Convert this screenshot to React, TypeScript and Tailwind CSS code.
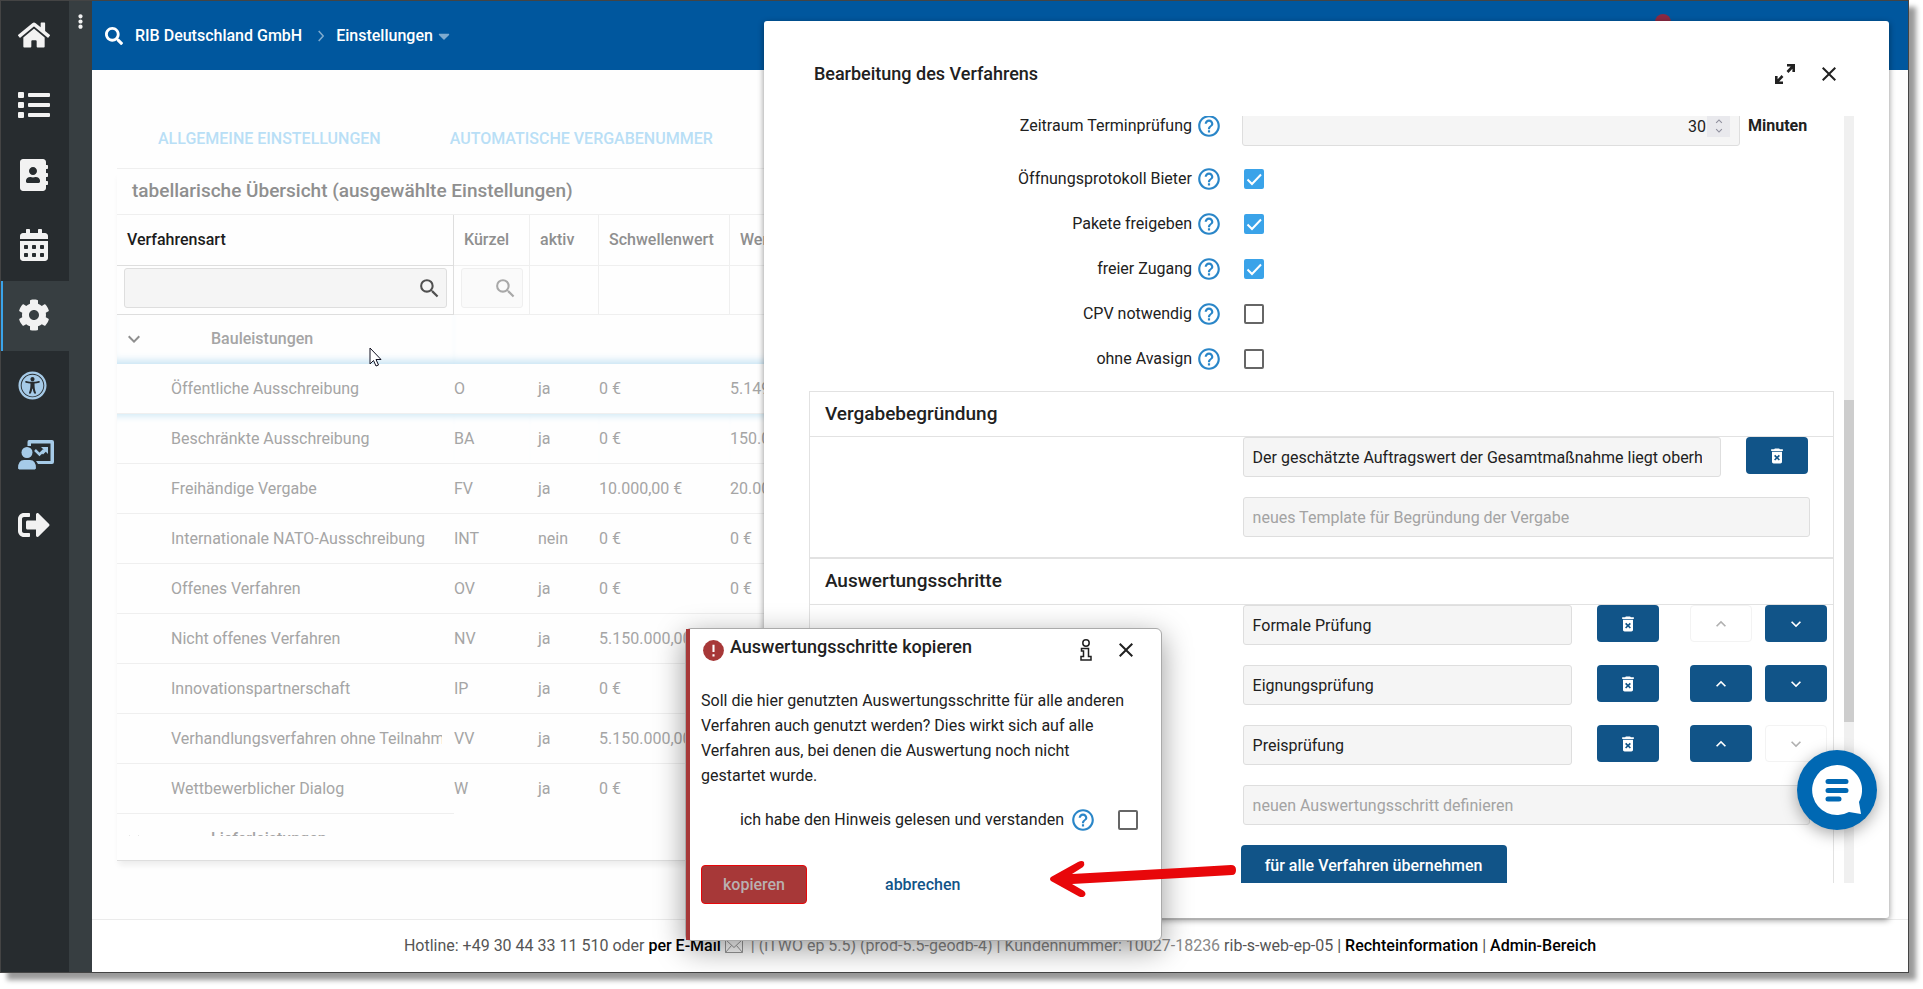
import type { ReactNode } from "react";
import {
  FaAddressBook,
  FaCalendarAlt,
  FaCaretDown,
  FaCog,
  FaEllipsisV,
  FaHome,
  FaList,
  FaSearch,
  FaSignOutAlt,
  FaUniversalAccess,
} from "react-icons/fa";
import {
  MdClose,
  MdDeleteForever,
  MdHelpOutline,
  MdKeyboardArrowDown,
  MdKeyboardArrowUp,
  MdSearch,
} from "react-icons/md";

const procedures = [
  { name: "Öffentliche Ausschreibung", code: "O", active: "ja", threshold: "0 €", limit: "5.149.999,00 €" },
  { name: "Beschränkte Ausschreibung", code: "BA", active: "ja", threshold: "0 €", limit: "150.000,00 €" },
  { name: "Freihändige Vergabe", code: "FV", active: "ja", threshold: "10.000,00 €", limit: "20.000,00 €" },
  { name: "Internationale NATO-Ausschreibung", code: "INT", active: "nein", threshold: "0 €", limit: "0 €" },
  { name: "Offenes Verfahren", code: "OV", active: "ja", threshold: "0 €", limit: "0 €" },
  { name: "Nicht offenes Verfahren", code: "NV", active: "ja", threshold: "5.150.000,00 €", limit: "" },
  { name: "Innovationspartnerschaft", code: "IP", active: "ja", threshold: "0 €", limit: "" },
  { name: "Verhandlungsverfahren ohne Teilnahmewettbewerb", code: "VV", active: "ja", threshold: "5.150.000,00 €", limit: "" },
  { name: "Wettbewerblicher Dialog", code: "W", active: "ja", threshold: "0 €", limit: "" },
];

const options = [
  { id: "protokoll", label: "Öffnungsprotokoll Bieter", checked: true },
  { id: "pakete", label: "Pakete freigeben", checked: true },
  { id: "zugang", label: "freier Zugang", checked: true },
  { id: "cpv", label: "CPV notwendig", checked: false },
  { id: "avasign", label: "ohne Avasign", checked: false },
];

const steps = ["Formale Prüfung", "Eignungsprüfung", "Preisprüfung"];

const inputClass =
  "h-10 min-w-0 rounded-[3px] border border-[#dedede] bg-[#f5f5f5] px-[9px] text-base text-[#212121] placeholder:text-[#a3a3a3]";

function PresentationIcon() {
  return (
    <svg viewBox="0 0 36 30" className="h-[30px] w-9" fill="#a6cbe8">
      <path d="M11 0h23q2 0 2 2v20q0 2-2 2H20l-2-3h14.500V3.500H13V6H9.500V2Q9.500 0 11 0z" />
      <circle cx="9" cy="12.500" r="5.500" />
      <path d="M0 28.500q0-8.500 6-8.500h6q6 0 6 8.500l-1.200 1H1.200z" />
      <path d="M17 10l4.500 4.500 4.500-4.500" fill="none" stroke="#a6cbe8" strokeWidth="2.500" />
      <path d="M23 7h7v7l-2.200-2.200-2.800 2.800-2-2 2.800-2.800z" />
    </svg>
  );
}

function SideItem({ label, active, children }: { label: string; active?: boolean; children: ReactNode }) {
  return (
    <a
      href="#"
      aria-label={label}
      className={
        active
          ? "flex h-[70px] items-center border-l-2 border-[#3aa3e9] bg-[#373e41] pb-0.5 pl-[15px] text-[#f2f2f2]"
          : "flex h-[70px] items-center pb-0.5 pl-[17px] text-[#f2f2f2]"
      }
    >
      {children}
    </a>
  );
}

function Sidebar() {
  return (
    <nav className="flex shrink-0">
      <div className="w-[68px] bg-[#272c2f]">
        <SideItem label="Startseite"><FaHome size={32} /></SideItem>
        <SideItem label="Liste"><FaList size={32} /></SideItem>
        <SideItem label="Adressbuch"><FaAddressBook size={32} /></SideItem>
        <SideItem label="Kalender"><FaCalendarAlt size={32} /></SideItem>
        <SideItem label="Einstellungen" active><FaCog size={32} /></SideItem>
        <SideItem label="Barrierefreiheit"><FaUniversalAccess size={29} color="#a6cbe8" /></SideItem>
        <SideItem label="Schulung"><PresentationIcon /></SideItem>
        <SideItem label="Abmelden"><FaSignOutAlt size={32} /></SideItem>
      </div>
      <div className="flex w-[23px] justify-center bg-[#373e41] pt-[13px]">
        <FaEllipsisV size={15} color="#f2f2f2" />
      </div>
    </nav>
  );
}

function TopBar() {
  return (
    <header className="relative flex h-[69px] shrink-0 items-center bg-[#00579e] pl-[13px] text-base font-medium text-white">
      <FaSearch size={18} />
      <span className="ml-3">RIB Deutschland GmbH</span>
      <svg viewBox="0 0 6 12" className="mr-3 ml-4 h-3 w-1.5" fill="none" stroke="#7fabcf" strokeWidth="1.500">
        <path d="M.7 1l4.500 5-4.500 5" />
      </svg>
      <span>Einstellungen</span>
      <FaCaretDown size={18} color="#7fabcf" className="ml-0.5" />
      <span className="absolute top-[13px] right-[237px] size-4 rounded-full bg-[#8b2942]" />
    </header>
  );
}

function ProcedureTable() {
  const head = "border-r border-b border-[#efefef] px-2.5 text-left font-medium text-[#8f8f8f]";
  return (
    <table className="w-full table-fixed border-separate border-spacing-0 text-base text-[#a5a5a5]">
      <colgroup>
        <col className="w-[337px]" />
        <col className="w-[76px]" />
        <col className="w-[69px]" />
        <col className="w-[131px]" />
        <col />
      </colgroup>
      <thead>
        <tr className="h-[51px]">
          <th className="border-r border-b border-[#dedede] px-2.5 text-left font-medium text-[#1c1c1c]">Verfahrensart</th>
          <th className={head}>Kürzel</th>
          <th className={head}>aktiv</th>
          <th className={head}>Schwellenwert</th>
          <th className={head}>Wertgrenze</th>
        </tr>
        <tr className="h-[49px]">
          <td className="border-r border-b border-[#dedede] pr-1.5 pb-1 pl-[7px]">
            <label className="flex h-10 items-center rounded-[3px] border border-[#dedede] bg-[#f5f5f5] pr-1">
              <input aria-label="Verfahrensart filtern" className="min-w-0 flex-1" />
              <MdSearch size={25} color="#505050" />
            </label>
          </td>
          <td className="border-r border-b border-[#efefef] pr-1.5 pb-1 pl-[7px]">
            <label className="flex h-10 items-center rounded-[3px] border border-[#efefef] bg-[#fafafa] pr-1">
              <input aria-label="Kürzel filtern" className="min-w-0 flex-1" />
              <MdSearch size={25} color="#a8a8a8" />
            </label>
          </td>
          <td className="border-r border-b border-[#efefef]" />
          <td className="border-r border-b border-[#efefef]" />
          <td className="border-r border-b border-[#efefef]" />
        </tr>
      </thead>
      <tbody>
        <tr className="h-[49px] font-medium">
          <td className="shadow-[inset_0_-9px_8px_-6px_#c4e2f3]">
            <div className="flex items-center pb-0.5 pl-[5px]">
              <MdKeyboardArrowDown size={24} color="#8f8f8f" />
              <span className="pl-[65px]">Bauleistungen</span>
            </div>
          </td>
          <td colSpan={4} className="shadow-[inset_0_-9px_8px_-6px_#c4e2f3]" />
        </tr>
        {procedures.map((p, i) => {
          const last = i === procedures.length - 1;
          const line = i === 1 ? "border-b border-[#efefef] shadow-[inset_0_8px_7px_-6px_#cfe8f5]" : "border-b border-[#efefef]";
          const cell = last ? "" : line;
          return (
            <tr key={p.code} className="h-[50px]">
              <td className={line}>
                <div className="mr-3 overflow-hidden pl-[54px] whitespace-nowrap">{p.name}</div>
              </td>
              <td className={cell}>{p.code}</td>
              <td className={cell}><span className="pl-2">{p.active}</span></td>
              <td className={cell}><div className="overflow-hidden whitespace-nowrap">{p.threshold}</div></td>
              <td className={cell}>{p.limit}</td>
            </tr>
          );
        })}
        <tr className="h-[50px] font-medium">
          <td colSpan={5}>
            <div className="flex items-center pl-[5px]">
              <MdKeyboardArrowDown size={24} color="#8f8f8f" />
              <span className="pl-[65px]">Lieferleistungen</span>
            </div>
          </td>
        </tr>
      </tbody>
    </table>
  );
}

function Help() {
  return <MdHelpOutline size={26} color="#2a86c8" className="shrink-0" />;
}

function Checkbox({ id, checked }: { id: string; checked?: boolean }) {
  return (
    <span className="grid size-5 shrink-0">
      <input
        type="checkbox"
        id={id}
        defaultChecked={checked}
        className="peer col-start-1 row-start-1 size-5 appearance-none rounded-[2px] border-2 border-[#666] bg-white checked:border-[#3aa3e9] checked:bg-[#3aa3e9]"
      />
      <svg
        viewBox="0 0 20 20"
        className="pointer-events-none invisible col-start-1 row-start-1 size-5 peer-checked:visible"
        fill="none"
        stroke="#fff"
        strokeWidth="2"
      >
        <path d="M3.500 10.500l4.500 4.500 9-9.500" />
      </svg>
    </span>
  );
}

function IconButton({ label, disabled, children }: { label: string; disabled?: boolean; children: ReactNode }) {
  return (
    <button
      type="button"
      aria-label={label}
      disabled={disabled}
      className="flex h-[37px] w-[62px] shrink-0 items-center justify-center rounded bg-[#115488] text-white disabled:border disabled:border-[#f3f3f3] disabled:bg-white disabled:text-[#b0b0b0]"
    >
      {children}
    </button>
  );
}

function EditPanel() {
  return (
    <section className="absolute top-5 right-[19px] bottom-[54px] flex w-[59%] flex-col rounded-[3px] bg-white pb-[35px] pl-[45px] shadow-[0_2px_6px_rgba(0,0,0,0.45)]">
      <div className="flex h-[95px] shrink-0 items-center pt-2.5 pr-[48px] pl-[5px] text-[#212121]">
        <h2 className="flex-1 text-lg font-medium">Bearbeitung des Verfahrens</h2>
        <button type="button" aria-label="Vergrößern" className="mr-[22px]">
          <svg viewBox="0 0 20 20" className="size-5" fill="none" stroke="currentColor" strokeWidth="2.600">
            <path d="M12 1.300h6.700V8M18.500 1.500l-6 6.500M8 18.700H1.300V12M1.500 18.500l6-6.500" />
          </svg>
        </button>
        <button type="button" aria-label="Schließen">
          <MdClose size={24} />
        </button>
      </div>

      <div className="flex min-h-0 flex-1 pr-[35px]">
        <div className="min-w-0 flex-1 overflow-hidden text-base text-[#212121]">
          <div className="-mt-2.5 flex h-10 items-center">
            <label htmlFor="zeitraum" className="flex w-5/12 items-center justify-end gap-1 pr-3.5">
              Zeitraum Terminprüfung <Help />
            </label>
            <div className="ml-1.5 grid flex-1 items-center">
              <input
                id="zeitraum"
                defaultValue="30"
                className={inputClass + " col-start-1 row-start-1 w-full pr-[33px] text-right"}
              />
              <span className="col-start-1 row-start-1 mr-2.5 flex h-[22px] w-[23px] flex-col items-center justify-center justify-self-end bg-[#e9e9ed] text-[#8f8f9d]">
                <MdKeyboardArrowUp size={16} className="-mb-1" />
                <MdKeyboardArrowDown size={16} />
              </span>
            </div>
            <span className="w-[94px] pl-2 font-bold">Minuten</span>
          </div>

          <div className="mt-2.5">
            {options.map((o) => (
              <div key={o.id} className="flex h-[45px] items-center">
                <label htmlFor={o.id} className="flex w-5/12 items-center justify-end gap-1 pr-3.5">
                  {o.label} <Help />
                </label>
                <span className="pl-2">
                  <Checkbox id={o.id} checked={o.checked} />
                </span>
              </div>
            ))}
          </div>

          <fieldset className="mt-2.5 border border-[#e2e2e2]">
            <h3 className="h-[45px] border-b border-[#e2e2e2] pt-2 pl-[15px] text-[19px]/7 font-medium">
              Vergabebegründung
            </h3>
            <div className="ml-[42%] flex items-start gap-[25px] pr-[25px] pl-[3px]">
              <input
                aria-label="Begründung"
                defaultValue="Der geschätzte Auftragswert der Gesamtmaßnahme liegt oberhalb"
                className={inputClass + " flex-1 pr-[18px]"}
              />
              <IconButton label="Löschen"><MdDeleteForever size={20} /></IconButton>
            </div>
            <div className="my-5 ml-[42%] flex pr-[23px] pl-[3px]">
              <input
                aria-label="Neue Begründung"
                placeholder="neues Template für Begründung der Vergabe"
                className={inputClass + " flex-1"}
              />
            </div>
          </fieldset>

          <fieldset className="border border-[#e2e2e2]">
            <h3 className="h-[46px] border-b border-[#e2e2e2] pt-2 pl-[15px] text-[19px]/7 font-medium">
              Auswertungsschritte
            </h3>
            <div className="ml-[42%] flex flex-col gap-5 pl-[3px]">
              {steps.map((step, i) => (
                <div key={step} className="flex items-start pr-1.5">
                  <input aria-label={"Schritt " + (i + 1)} defaultValue={step} className={inputClass + " flex-1"} />
                  <span className="mr-[31px] ml-[25px]">
                    <IconButton label="Löschen"><MdDeleteForever size={20} /></IconButton>
                  </span>
                  <span className="mr-[13px]">
                    <IconButton label="Nach oben" disabled={i === 0}><MdKeyboardArrowUp size={20} /></IconButton>
                  </span>
                  <IconButton label="Nach unten" disabled={i === steps.length - 1}>
                    <MdKeyboardArrowDown size={20} />
                  </IconButton>
                </div>
              ))}
              <div className="flex pr-[23px]">
                <input
                  aria-label="Neuer Auswertungsschritt"
                  placeholder="neuen Auswertungsschritt definieren"
                  className={inputClass + " flex-1"}
                />
              </div>
              <button
                type="button"
                className="-ml-0.5 h-[41px] w-[266px] rounded bg-[#115488] text-base font-medium text-white"
              >
                für alle Verfahren übernehmen
              </button>
            </div>
          </fieldset>
        </div>
        <div className="ml-2.5 flex w-2.5 flex-col bg-[#f0f0f0]">
          <div className="h-[37%]" />
          <div className="h-[42%] bg-[#cdcdcd]" />
        </div>
      </div>
    </section>
  );
}

function CopyDialog() {
  return (
    <div
      role="dialog"
      aria-label="Auswertungsschritte kopieren"
      className="absolute right-[746px] bottom-[31px] flex w-[477px] rounded-md border border-[#aaa] bg-white text-base text-[#212121] shadow-[0_8px_30px_rgba(0,0,0,0.4)]"
    >
      <div className="w-1 shrink-0 bg-[#a73838]" />
      <div className="flex-1 px-[11px] pb-9">
        <div className="flex h-[42px] items-center">
          <svg viewBox="0 0 24 24" className="size-[25px]">
            <circle cx="12" cy="12" r="10" fill="#a73838" />
            <path d="M12 6.500v7M12 15.500v2.200" stroke="#fff" strokeWidth="2" />
          </svg>
          <h2 className="flex-1 pb-1.5 pl-1 text-lg font-medium">Auswertungsschritte kopieren</h2>
          <button type="button" aria-label="Information" className="mr-[22px]">
            <svg viewBox="0 0 12 22" className="h-[22px] w-3" fill="none" stroke="#212121" strokeWidth="1.500">
              <circle cx="6" cy="4" r="3.200" />
              <path d="M1.500 9.500h7v8h2.500V21H1v-3.500h2.500V12h-2z" />
            </svg>
          </button>
          <button type="button" aria-label="Schließen" className="mr-3">
            <MdClose size={24} />
          </button>
        </div>
        <p className="mt-[17px] pr-4 leading-[25px]">
          Soll die hier genutzten Auswertungsschritte für alle anderen Verfahren auch genutzt werden? Dies wirkt sich
          auf alle Verfahren aus, bei denen die Auswertung noch nicht gestartet wurde.
        </p>
        <div className="mt-[7px] flex h-[50px] items-center justify-end pr-3">
          <label htmlFor="hinweis" className="flex items-center gap-1.5 pr-[22px]">
            ich habe den Hinweis gelesen und verstanden <Help />
          </label>
          <Checkbox id="hinweis" />
        </div>
        <div className="mt-5 flex gap-[78px] font-medium">
          <button
            type="button"
            disabled
            className="h-[39px] w-[106px] rounded border border-[#e8070a] bg-[#a73838] text-[#b9b0b0]"
          >
            kopieren
          </button>
          <button type="button" className="text-[#115488]">
            abbrechen
          </button>
        </div>
      </div>
    </div>
  );
}

export default function App() {
  return (
    <div className="h-screen min-h-[900px] overflow-hidden bg-white pr-3.5 pb-4 font-[Roboto,sans-serif]">
      <div className="relative flex h-full border border-[#444] bg-white shadow-[7px_7px_5px_rgba(0,0,0,0.4)]">
        <Sidebar />
        <div className="flex min-w-0 flex-1 flex-col">
          <TopBar />
          <main className="flex min-h-0 flex-1 flex-col overflow-hidden bg-[#fefefe] pr-6 pl-[25px]">
            <nav className="flex h-[99px] shrink-0 items-center gap-[69px] border-b border-[#efefef] pt-10 pl-[41px] text-base font-medium text-[#b9dff6]">
              <a href="#">ALLGEMEINE EINSTELLUNGEN</a>
              <a href="#">AUTOMATISCHE VERGABENUMMER</a>
            </nav>
            <div className="mb-[58px] flex min-h-0 flex-1 flex-col border-b border-[#dedede] pb-6 shadow-[0_6px_6px_-2px_#ececec]">
              <h1 className="h-[46px] shrink-0 border-b border-[#efefef] pt-2 pl-[15px] text-[19px]/7 font-medium text-[#8f8f8f]">
                tabellarische Übersicht (ausgewählte Einstellungen)
              </h1>
              <div className="min-h-0 flex-1 overflow-hidden">
                <ProcedureTable />
              </div>
            </div>
          </main>
          <footer className="flex h-[53px] shrink-0 items-center justify-center border-t border-[#ebebeb] text-base whitespace-pre text-[#555]">
            <span>Hotline: +49 30 44 33 11 510 oder </span>
            <a href="#" className="font-medium text-black">per E-Mail</a>
            <svg viewBox="0 0 18 14" className="mx-1 h-3.5 w-[18px]" fill="none" stroke="#999">
              <path d="M.5.500h17v13H.5zM.5.500l8.500 8 8.500-8M.5 13.500l6-7M17.500 13.500l-6-7" />
            </svg>
            <span className="text-[#888]">{" | (iTWO ep 5.5) (prod-5.5-geodb-4) | Kundennummer: 10027-18236 "}</span>
            <span>rib-s-web-ep-05 | </span>
            <a href="#" className="font-medium text-black">Rechteinformation</a>
            <span>{" | "}</span>
            <a href="#" className="font-medium text-black">Admin-Bereich</a>
          </footer>
        </div>

        <EditPanel />
        <CopyDialog />

        <svg viewBox="0 0 190 44" className="pointer-events-none absolute right-[672px] bottom-[72px] h-11 w-[190px]" fill="#e8070a">
          <path d="M26 18L134 12l51-3q5 0 5 5t-4 5l-52 3L26 28l12 7q3 3 0 5.500-2 1-5 0L5 25q-2-2 0-4L32 6q4-2 6 0 1 3-1 5z" />
        </svg>

        <svg viewBox="0 0 14 20" className="pointer-events-none absolute top-[346px] left-[368px] h-5 w-3.5" fill="#fff" stroke="#101020">
          <path d="M1 1v16l3.500-3.500L7 19l2.500-1-2.500-5.500h5z" />
        </svg>

        <button
          type="button"
          aria-label="Chat öffnen"
          className="absolute right-[31px] bottom-[142px] flex size-20 items-center justify-center rounded-full bg-[#0068b3] shadow-[0_4px_16px_rgba(0,0,0,0.35)]"
        >
          <svg viewBox="0 0 50 50" className="size-[50px]">
            <path d="M25 0a25 25 0 1 0 12 47l12 2-2-12A25 25 0 0 0 25 0z" fill="#fff" />
            <path d="M16 16.500h18M16 25.500h18M16 34h11" stroke="#0068b3" strokeWidth="5" strokeLinecap="round" />
          </svg>
        </button>
      </div>
    </div>
  );
}
